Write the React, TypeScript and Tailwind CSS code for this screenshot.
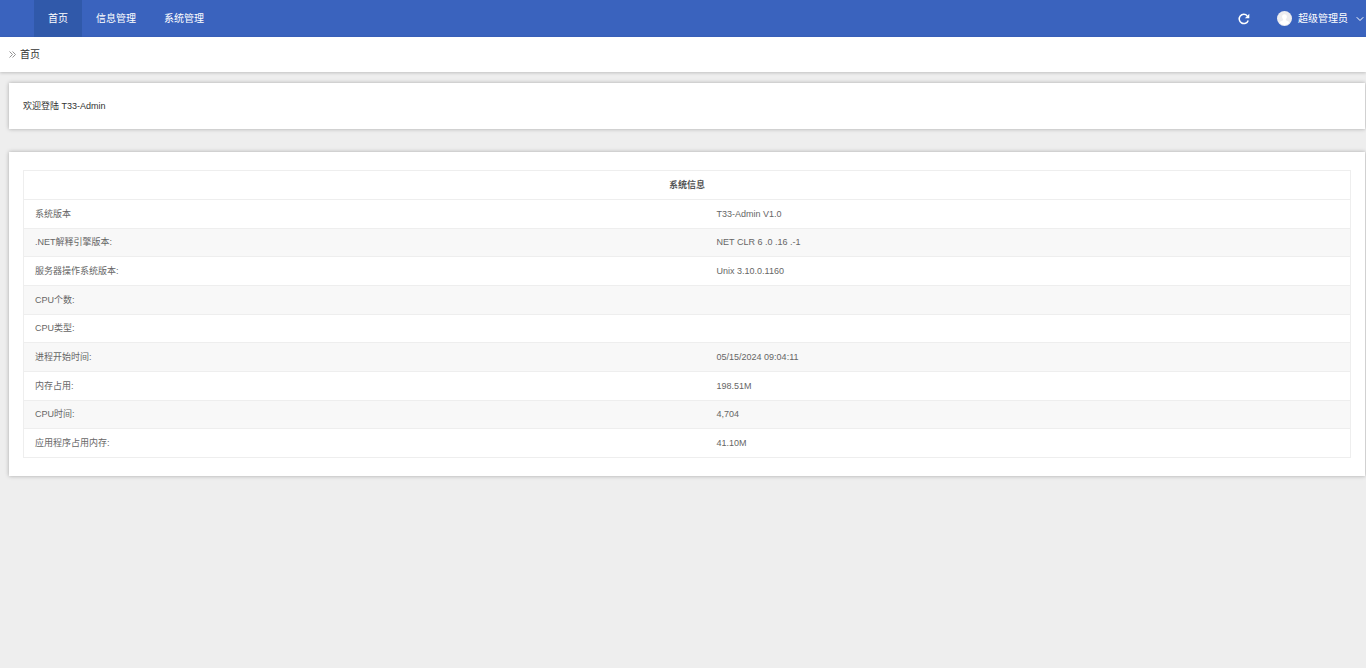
import { ChevronDown } from "lucide-react";

const navItems = ["首页", "信息管理", "系统管理"];

const systemInfo = [
  { label: "系统版本", value: "T33-Admin V1.0" },
  { label: ".NET解释引擎版本:", value: "NET CLR 6 .0 .16 .-1" },
  { label: "服务器操作系统版本:", value: "Unix 3.10.0.1160" },
  { label: "CPU个数:", value: "" },
  { label: "CPU类型:", value: "" },
  { label: "进程开始时间:", value: "05/15/2024 09:04:11" },
  { label: "内存占用:", value: "198.51M" },
  { label: "CPU时间:", value: "4,704" },
  { label: "应用程序占用内存:", value: "41.10M" },
];

const Header = () => (
  <header className="flex h-[37px] items-center justify-between bg-[#3a63be] pl-[34px] text-[10px] text-white">
    <nav className="flex h-full">
      {navItems.map((item, index) => (
        <a
          key={item}
          href="#"
          className={`flex h-full items-center px-3.5 ${index === 0 ? "bg-[#3059aa]" : ""}`}
        >
          {item}
        </a>
      ))}
    </nav>
    <div className="flex items-center gap-[27px]">
      <button type="button" aria-label="刷新" className="cursor-pointer">
        <svg className="h-3 w-3" viewBox="0 0 12 12" fill="none">
          <path d="M10.2 7.4A4.6 4.6 0 1 1 9.3 2.9" stroke="currentColor" strokeWidth="1.5" />
          <path d="M11.3 0.8v4.4H6.9z" fill="currentColor" />
        </svg>
      </button>
      <button type="button" className="flex cursor-pointer items-center">
        <svg className="mr-1.5 h-[15px] w-[15px]" viewBox="0 0 15 15">
          <circle cx="7.5" cy="7.5" r="7.5" fill="#ececef" />
          <path
            d="M7.5 3.2c1.5 0 2.4 1.1 2.4 2.6 0 1.1-.5 2-1.1 2.5v.8c.2.7 3 1 3.6 2.6A7 7 0 0 1 7.5 14a7 7 0 0 1-4.9-2.3c.6-1.6 3.4-1.9 3.6-2.6v-.8c-.6-.5-1.1-1.4-1.1-2.5 0-1.5.9-2.6 2.4-2.6z"
            fill="#ffffff"
          />
        </svg>
        <span>超级管理员</span>
        <ChevronDown className="ml-1.5 h-3 w-3" strokeWidth={2} />
      </button>
    </div>
  </header>
);

const Breadcrumb = () => (
  <div className="flex h-[35px] items-center gap-1 bg-white pl-[9px] text-[10px] text-[#333333] shadow-[0_1px_3px_rgba(0,0,0,0.2)]">
    <svg className="h-[7px] w-[7px]" viewBox="0 0 7 7" fill="none" stroke="#888888" strokeWidth="0.9">
      <path d="M0.5 0.5l3 3-3 3M3.5 0.5l3 3-3 3" />
    </svg>
    <a href="#">首页</a>
  </div>
);

const App = () => {
  return (
    <div className="min-h-screen bg-[#eeeeee] font-['Liberation_Sans','Noto_Sans_CJK_SC',sans-serif] text-[9px] leading-3 text-[#666666]">
      <Header />
      <Breadcrumb />
      <main className="flex flex-col gap-[23px] pt-[11px] pr-px pl-[9px]">
        <section className="bg-white px-[14px] py-[17px] text-[#333333] shadow-[0_0_4px_rgba(0,0,0,0.3)]">
          欢迎登陆 T33-Admin
        </section>
        <section className="bg-white px-[14px] py-[18px] shadow-[0_0_4px_rgba(0,0,0,0.3)]">
          <table className="h-72 w-full table-fixed border-collapse border border-[#eeeeee] text-left">
            <colgroup>
              <col className="w-[51.4%]" />
              <col />
            </colgroup>
            <thead>
              <tr className="h-[29px]">
                <th colSpan={2} className="text-center font-bold text-[#555555]">
                  系统信息
                </th>
              </tr>
            </thead>
            <tbody>
              {systemInfo.map((row) => (
                <tr key={row.label} className="border-t border-[#eeeeee] even:bg-[#f8f8f8]">
                  <td className="px-[11px]">{row.label}</td>
                  <td className="px-[11px]">{row.value}</td>
                </tr>
              ))}
            </tbody>
          </table>
        </section>
      </main>
    </div>
  );
};

export default App;
